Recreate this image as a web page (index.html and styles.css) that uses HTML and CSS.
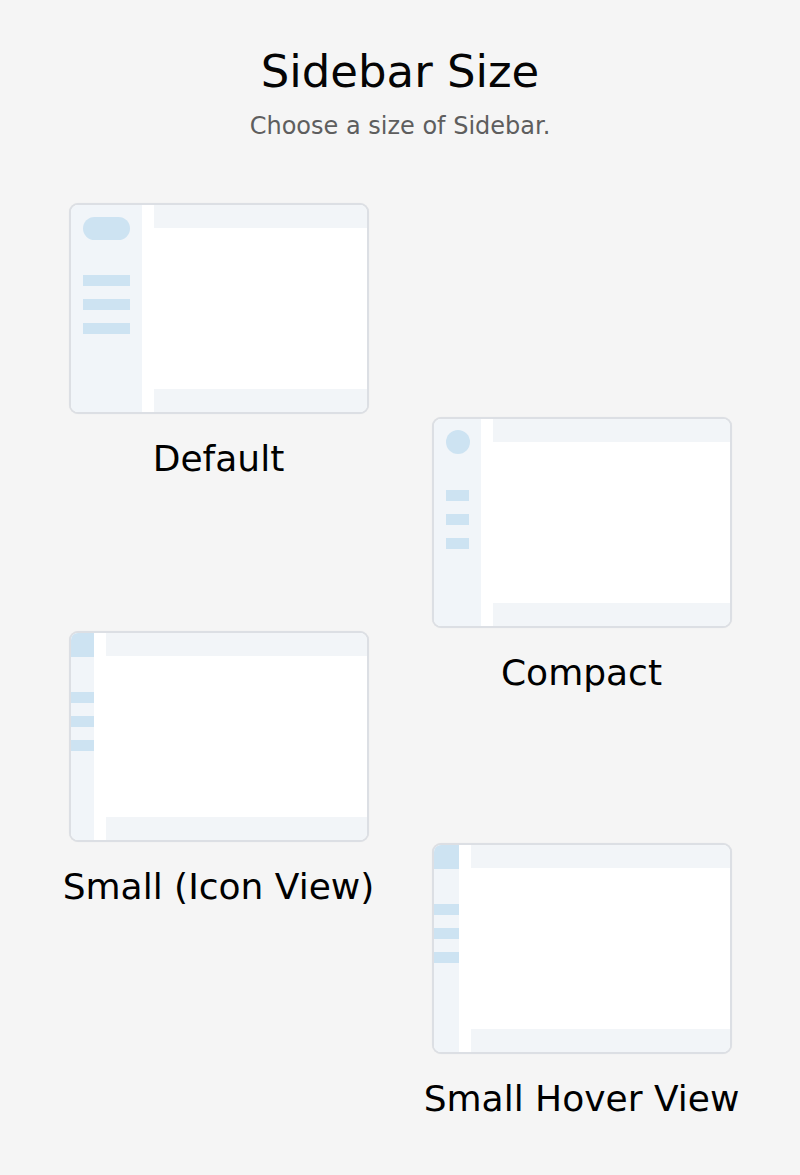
FILE: index.html
```html
<!DOCTYPE html>
<html lang="en">
<head>
<meta charset="utf-8">
<title>Sidebar Size</title>
<link rel="stylesheet" href="styles.css">
</head>
<body>
<main class="page">
  <header class="intro">
    <h1 class="title">Sidebar Size</h1>
    <p class="subtitle">Choose a size of Sidebar.</p>
  </header>
  <section class="options">
    <div class="option option-1">
      <div class="preview">
        <div class="side side-default">
          <div class="logo logo-pill"></div>
          <div class="menu"><span></span><span></span><span></span></div>
        </div>
        <div class="content"><div class="bar"></div><div class="body"></div><div class="bar"></div></div>
      </div>
      <div class="label">Default</div>
    </div>
    <div class="option option-2">
      <div class="preview">
        <div class="side side-compact">
          <div class="logo logo-circle"></div>
          <div class="menu"><span></span><span></span><span></span></div>
        </div>
        <div class="content"><div class="bar"></div><div class="body"></div><div class="bar"></div></div>
      </div>
      <div class="label">Compact</div>
    </div>
    <div class="option option-3">
      <div class="preview">
        <div class="side side-small">
          <div class="logo logo-block"></div>
          <div class="menu"><span></span><span></span><span></span></div>
        </div>
        <div class="content"><div class="bar"></div><div class="body"></div><div class="bar"></div></div>
      </div>
      <div class="label">Small (Icon View)</div>
    </div>
    <div class="option option-4">
      <div class="preview">
        <div class="side side-hover">
          <div class="logo logo-block"></div>
          <div class="menu"><span></span><span></span><span></span></div>
        </div>
        <div class="content"><div class="bar"></div><div class="body"></div><div class="bar"></div></div>
      </div>
      <div class="label">Small Hover View</div>
    </div>
  </section>
</main>
</body>
</html>
```
FILE: styles.css
```css
* { box-sizing: border-box; }
html, body { margin: 0; padding: 0; }
body {
  background: #f5f5f5;
  font-family: "DejaVu Sans", "Open Sans", sans-serif;
  color: #000;
}
.page { padding-top: 45px; }
.intro { text-align: center; }
.title {
  margin: 0;
  font-size: 45px;
  font-weight: 400;
  line-height: 54px;
  color: #050505;
}
.subtitle {
  margin: 13px 0 0;
  font-size: 24px;
  line-height: 28px;
  color: #5e5e5e;
}
.options {
  margin-top: 63px;
  display: grid;
  grid-template-columns: 330px 330px;
  grid-template-rows: 214px 214px 212px 212px auto;
  column-gap: 33px;
  justify-content: center;
}
.option {
  display: flex;
  flex-direction: column;
  align-items: center;
}
.option-1 { grid-column: 1; grid-row: 1 / span 2; }
.option-2 { grid-column: 2; grid-row: 2 / span 2; }
.option-3 { grid-column: 1; grid-row: 3 / span 2; }
.option-4 { grid-column: 2; grid-row: 4 / span 2; }

.preview {
  flex: none;
  width: 300px;
  height: 211px;
  border: 2px solid #dcdfe4;
  border-radius: 9px;
  background: #fff;
  display: flex;
  overflow: hidden;
  box-shadow: 0 0 1px rgba(0,0,0,0.08);
}
.side { background: #f1f5f9; flex: none; }
.side-default { width: 71px; padding: 12px; }
.side-compact { width: 47px; padding: 11px 12px; }
.side-small { width: 23px; }
.side-hover { width: 25px; }

.logo { background: #cde3f2; }
.logo-pill { width: 47px; height: 23px; border-radius: 12px; }
.logo-circle { width: 24px; height: 24px; border-radius: 50%; }
.logo-block { width: 100%; height: 24px; }

.menu { display: flex; flex-direction: column; gap: 13px; margin-top: 35px; }
.side-compact .menu { margin-top: 36px; }
.menu span { display: block; height: 11px; background: #cde3f2; }

.content {
  flex: 1;
  padding-left: 12px;
  display: flex;
  flex-direction: column;
}
.bar { height: 23px; background: #f2f5f8; }
.body { flex: 1; background: #fff; }

.label {
  flex: none;
  margin-top: 23px;
  font-size: 36px;
  line-height: 44px;
  font-weight: 400;
  color: #000;
  white-space: nowrap;
}
```
